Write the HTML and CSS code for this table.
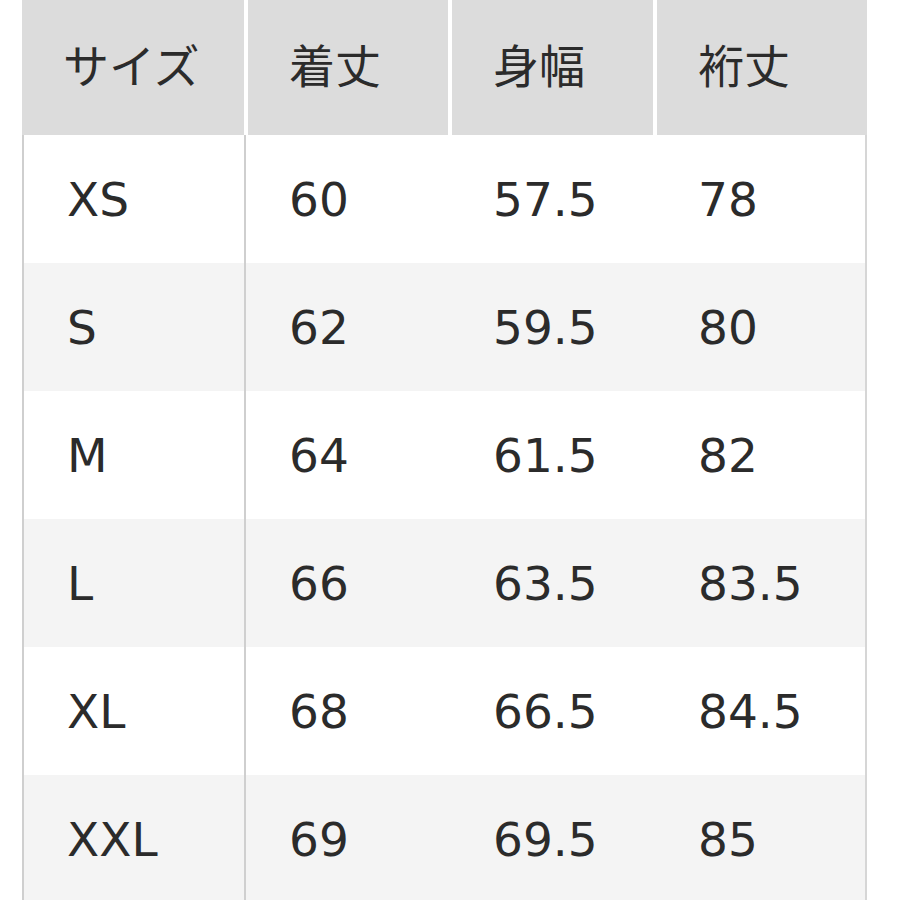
FILE: index.html
```html
<!DOCTYPE html>
<html lang="ja">
<head>
<meta charset="utf-8">
<title>サイズ表</title>
<link rel="stylesheet" href="styles.css">
</head>
<body>
<div class="table">
  <div class="row head">
    <div class="cell c1">サイズ</div>
    <div class="cell">着丈</div>
    <div class="cell">身幅</div>
    <div class="cell">裄丈</div>
  </div>
  <div class="body">
    <div class="row">
      <div class="cell c1">XS</div><div class="cell">60</div><div class="cell">57.5</div><div class="cell">78</div>
    </div>
    <div class="row alt">
      <div class="cell c1">S</div><div class="cell">62</div><div class="cell">59.5</div><div class="cell">80</div>
    </div>
    <div class="row">
      <div class="cell c1">M</div><div class="cell">64</div><div class="cell">61.5</div><div class="cell">82</div>
    </div>
    <div class="row alt">
      <div class="cell c1">L</div><div class="cell">66</div><div class="cell">63.5</div><div class="cell">83.5</div>
    </div>
    <div class="row">
      <div class="cell c1">XL</div><div class="cell">68</div><div class="cell">66.5</div><div class="cell">84.5</div>
    </div>
    <div class="row alt">
      <div class="cell c1">XXL</div><div class="cell">69</div><div class="cell">69.5</div><div class="cell">85</div>
    </div>
  </div>
</div>
</body>
</html>
```

FILE: styles.css
```css
html, body {
  margin: 0;
  padding: 0;
  background: #ffffff;
  height: 900px;
  overflow: hidden;
}

.table {
  margin-left: 22px;
  width: 845px;
  color: #2b2b2b;
}

.row {
  display: grid;
  grid-template-columns: 222px 200px 201px 210px;
  column-gap: 4px;
  height: 128px;
  background: #ffffff;
}

.row.alt {
  background: #f4f4f4;
}

.cell {
  display: flex;
  align-items: center;
  padding-left: 41px;
  font-family: "DejaVu Sans", Verdana, sans-serif;
  font-size: 47px;
  white-space: nowrap;
}

.cell.c1 {
  padding-left: 43px;
  border-right: 2px solid #cfcfcf;
  margin-right: -2px;
}

.head {
  height: 135px;
  background: #ffffff;
}

.head .cell {
  background: #dcdcdc;
  font-family: "Noto Sans CJK JP", "Noto Sans", sans-serif;
  font-size: 46px;
  padding-left: 41px;
  padding-bottom: 10px;
}

.head .cell.c1 {
  padding-left: 41px;
  border-right: none;
  margin-right: 0;
}

.body {
  border-left: 2px solid #cfcfcf;
  border-right: 2px solid #d6d6d6;
}

.body .row {
  grid-template-columns: 220px 200px 201px 208px;
}
```
